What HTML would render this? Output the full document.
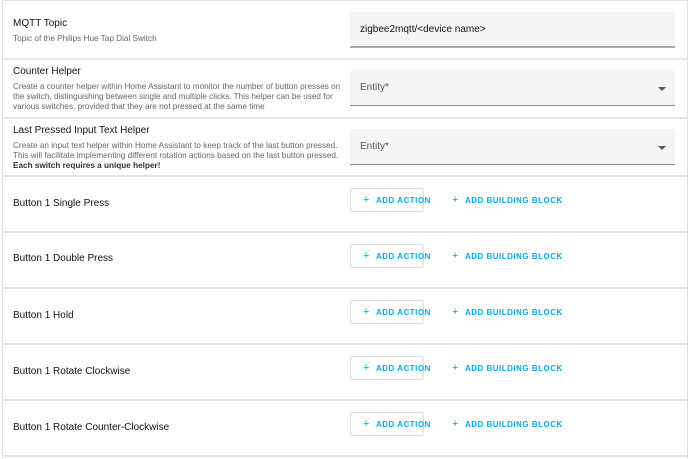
<!DOCTYPE html>
<html><head><style>
*{box-sizing:border-box;margin:0;padding:0}
html,body{width:690px;height:459px;overflow:hidden}
body{background:#fff;font-family:"Liberation Sans",Arial,sans-serif;position:relative;color:#212121}
.card{position:absolute;left:2px;top:0;width:686px;height:470px;border:1px solid #e0e0e0}
.sep{position:absolute;left:2px;width:686px;height:2px;background:#e4e4e4}
.t{position:absolute;left:13px;font-size:10px;color:#111}
.d{position:absolute;left:13px;font-size:8.2px;color:#666;line-height:10px;white-space:nowrap}
.field{position:absolute;left:350px;width:325px;height:36px;background:#f5f5f5;border-bottom:1px solid #8a8a8a;border-radius:3px 3px 0 0;font-size:10px;padding:0 10px;line-height:36px;color:#555}
.field.top{border-bottom:2px solid #aaa;color:#111}
.arr{position:absolute;right:9px;top:17px;width:0;height:0;border-left:4px solid transparent;border-right:4px solid transparent;border-top:4px solid #555}
.btn{position:absolute;left:350px;width:74px;height:24px;border:1px solid #dcdcdc;border-radius:3px;font-size:8px;font-weight:bold;letter-spacing:0.5px;color:#03a9f4;line-height:22px;padding-left:12px;white-space:nowrap}
.bb{position:absolute;left:452px;font-size:8px;font-weight:bold;letter-spacing:0.5px;color:#03a9f4;white-space:nowrap}
.p{font-weight:normal;font-size:11px;margin-right:6px}
</style></head><body>
<div class="card"></div>
<div class="sep" style="top:58px"></div>
<div class="sep" style="top:117px"></div>
<div class="sep" style="top:175px"></div>
<div class="sep" style="top:231px"></div>
<div class="sep" style="top:287px"></div>
<div class="sep" style="top:343px"></div>
<div class="sep" style="top:399px"></div>
<div class="sep" style="top:455px"></div>

<div class="t" style="top:18px">MQTT Topic</div>
<div class="d" style="top:34px">Topic of the Philips Hue Tap Dial Switch</div>
<div class="field top" style="top:12px">zigbee2mqtt/&lt;device name&gt;</div>

<div class="t" style="top:66px">Counter Helper</div>
<div class="d" style="top:82px">Create a counter helper within Home Assistant to monitor the number of button presses on<br>the switch, distinguishing between single and multiple clicks. This helper can be used for<br>various switches, provided that they are not pressed at the same time</div>
<div class="field" style="top:70px">Entity*<div class="arr"></div></div>

<div class="t" style="top:125px">Last Pressed Input Text Helper</div>
<div class="d" style="top:141px">Create an input text helper within Home Assistant to keep track of the last button pressed.<br>This will facilitate implementing different rotation actions based on the last button pressed.<br><b style="color:#333">Each switch requires a unique helper!</b></div>
<div class="field" style="top:129px">Entity*<div class="arr"></div></div>

<div class="t" style="top:198px">Button 1 Single Press</div>
<div class="btn" style="top:188px"><span class="p">+</span>ADD ACTION</div>
<div class="bb" style="top:194px"><span class="p">+</span>ADD BUILDING BLOCK</div>

<div class="t" style="top:253px">Button 1 Double Press</div>
<div class="btn" style="top:244px"><span class="p">+</span>ADD ACTION</div>
<div class="bb" style="top:250px"><span class="p">+</span>ADD BUILDING BLOCK</div>

<div class="t" style="top:310px">Button 1 Hold</div>
<div class="btn" style="top:300px"><span class="p">+</span>ADD ACTION</div>
<div class="bb" style="top:306px"><span class="p">+</span>ADD BUILDING BLOCK</div>

<div class="t" style="top:366px">Button 1 Rotate Clockwise</div>
<div class="btn" style="top:356px"><span class="p">+</span>ADD ACTION</div>
<div class="bb" style="top:362px"><span class="p">+</span>ADD BUILDING BLOCK</div>

<div class="t" style="top:422px">Button 1 Rotate Counter-Clockwise</div>
<div class="btn" style="top:412px"><span class="p">+</span>ADD ACTION</div>
<div class="bb" style="top:418px"><span class="p">+</span>ADD BUILDING BLOCK</div>
</body></html>
